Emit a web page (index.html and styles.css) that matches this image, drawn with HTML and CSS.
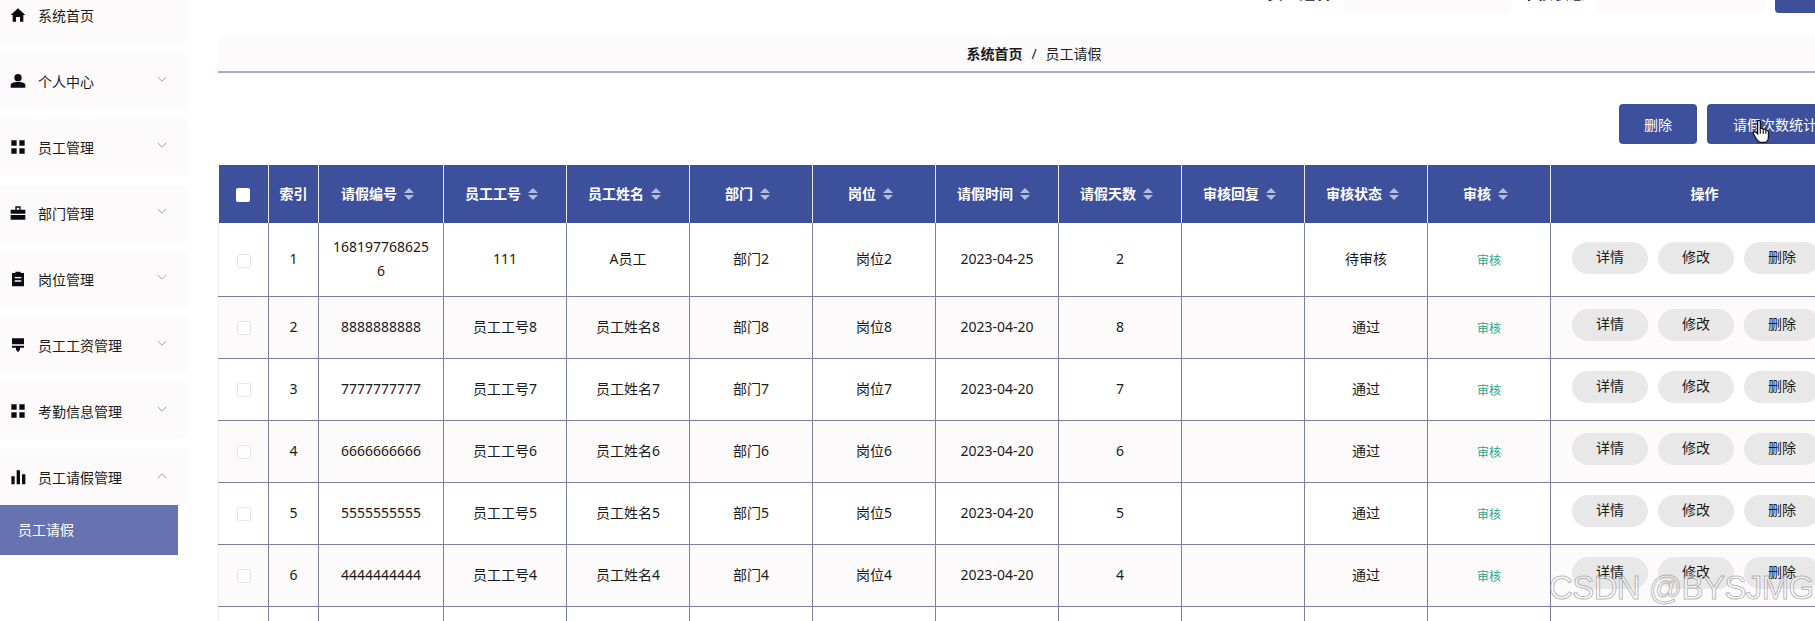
FILE: index.html
```html
<!DOCTYPE html>
<html lang="en">
<head>
  <meta charset="UTF-8">
  <meta name="viewport" content="width=device-width, initial-scale=1.0">
  <title>员工请假</title>
  <link rel="stylesheet" href="styles.css">
</head>
<body>
  <div class="page">
    <aside class="sidebar">
      <div class="menu-item first">
        <svg class="menu-icon" viewBox="0 0 24 24"><path d="M12 2 L23 12 H20 V22 H15 V15 H9 V22 H4 V12 H1 Z"/></svg>
        <span>系统首页</span>
      </div>
      <div class="menu-item">
        <svg class="menu-icon" viewBox="0 0 24 24"><circle cx="12" cy="7" r="5.5"/><path d="M1 22 V18 C1 14 8 13.5 12 13.5 C16 13.5 23 14 23 18 V22 Z"/></svg>
        <span>个人中心</span>
        <svg class="chevron" viewBox="0 0 12 8"><path d="M1 1 L6 6 L11 1"/></svg>
      </div>
      <div class="menu-item">
        <svg class="menu-icon" viewBox="0 0 24 24"><path d="M2 2 H10 V10 H2 Z M14 2 H22 V10 H14 Z M2 14 H10 V22 H2 Z M14 14 H22 V22 H14 Z"/></svg>
        <span>员工管理</span>
        <svg class="chevron" viewBox="0 0 12 8"><path d="M1 1 L6 6 L11 1"/></svg>
      </div>
      <div class="menu-item">
        <svg class="menu-icon" viewBox="0 0 24 24"><path d="M8 2 H16 V7 H23 V13 H1 V7 H8 Z M10 4 V7 H14 V4 Z M1 15 H23 V22 H1 Z"/></svg>
        <span>部门管理</span>
        <svg class="chevron" viewBox="0 0 12 8"><path d="M1 1 L6 6 L11 1"/></svg>
      </div>
      <div class="menu-item">
        <svg class="menu-icon" viewBox="0 0 24 24"><path d="M8 1 H16 V3 H21 V23 H3 V3 H8 Z M7 9 V11 H17 V9 Z M7 14 V16 H17 V14 Z"/></svg>
        <span>岗位管理</span>
        <svg class="chevron" viewBox="0 0 12 8"><path d="M1 1 L6 6 L11 1"/></svg>
      </div>
      <div class="menu-item">
        <svg class="menu-icon" viewBox="0 0 24 24"><path d="M3 2 H21 V11 H3 Z M3 13 H21 V16 H15 V19 L12 23 L9 19 V16 H3 Z"/></svg>
        <span>员工工资管理</span>
        <svg class="chevron" viewBox="0 0 12 8"><path d="M1 1 L6 6 L11 1"/></svg>
      </div>
      <div class="menu-item">
        <svg class="menu-icon" viewBox="0 0 24 24"><path d="M2 2 H10 V10 H2 Z M14 2 H22 V10 H14 Z M2 14 H10 V22 H2 Z M14 14 H22 V22 H14 Z"/></svg>
        <span>考勤信息管理</span>
        <svg class="chevron" viewBox="0 0 12 8"><path d="M1 1 L6 6 L11 1"/></svg>
      </div>
      <div class="menu-item open">
        <svg class="menu-icon" viewBox="0 0 24 24"><path d="M2 11 H7 V23 H2 Z M10 2 H15 V23 H10 Z M18 8 H23 V23 H18 Z"/></svg>
        <span>员工请假管理</span>
        <svg class="chevron" viewBox="0 0 12 8"><path d="M1 7 L6 2 L11 7"/></svg>
      </div>
      <div class="submenu-item">员工请假</div>
    </aside>

    <main class="content">
      <div class="search-bar">
        <span class="search-label">员工姓名</span>
        <div class="search-input"></div>
        <span class="search-label">审核状态</span>
        <div class="search-input"></div>
        <div class="search-btn"></div>
      </div>

      <div class="breadcrumb">
        <b>系统首页</b><span class="sep">/</span><span>员工请假</span>
      </div>

      <div class="toolbar">
        <button class="tool-btn">删除</button>
        <button class="tool-btn wide">请假次数统计</button>
      </div>

      <table class="data-table">
        <colgroup>
          <col class="c-check"><col class="c-index"><col class="c-num">
          <col class="c-std"><col class="c-std"><col class="c-std"><col class="c-std"><col class="c-std">
          <col class="c-std"><col class="c-std"><col class="c-std"><col class="c-std">
          <col class="c-ops">
        </colgroup>
        <thead>
          <tr>
            <th><span class="head-check"></span></th>
            <th>索引</th>
            <th>请假编号<i class="sort"></i></th>
            <th>员工工号<i class="sort"></i></th>
            <th>员工姓名<i class="sort"></i></th>
            <th>部门<i class="sort"></i></th>
            <th>岗位<i class="sort"></i></th>
            <th>请假时间<i class="sort"></i></th>
            <th>请假天数<i class="sort"></i></th>
            <th>审核回复<i class="sort"></i></th>
            <th>审核状态<i class="sort"></i></th>
            <th>审核<i class="sort"></i></th>
            <th>操作</th>
          </tr>
        </thead>
        <tbody>
          <tr class="row-first">
            <td><span class="row-check"></span></td><td>1</td><td>1681977686256</td><td>111</td><td>A员工</td><td>部门2</td><td>岗位2</td><td>2023-04-25</td><td>2</td><td></td><td>待审核</td><td class="audit">审核</td>
            <td class="ops"><div class="ops-row"><span class="op-btn">详情</span><span class="op-btn">修改</span><span class="op-btn">删除</span></div></td>
          </tr>
          <tr>
            <td><span class="row-check"></span></td><td>2</td><td>8888888888</td><td>员工工号8</td><td>员工姓名8</td><td>部门8</td><td>岗位8</td><td>2023-04-20</td><td>8</td><td></td><td>通过</td><td class="audit">审核</td>
            <td class="ops"><div class="ops-row"><span class="op-btn">详情</span><span class="op-btn">修改</span><span class="op-btn">删除</span></div></td>
          </tr>
          <tr>
            <td><span class="row-check"></span></td><td>3</td><td>7777777777</td><td>员工工号7</td><td>员工姓名7</td><td>部门7</td><td>岗位7</td><td>2023-04-20</td><td>7</td><td></td><td>通过</td><td class="audit">审核</td>
            <td class="ops"><div class="ops-row"><span class="op-btn">详情</span><span class="op-btn">修改</span><span class="op-btn">删除</span></div></td>
          </tr>
          <tr>
            <td><span class="row-check"></span></td><td>4</td><td>6666666666</td><td>员工工号6</td><td>员工姓名6</td><td>部门6</td><td>岗位6</td><td>2023-04-20</td><td>6</td><td></td><td>通过</td><td class="audit">审核</td>
            <td class="ops"><div class="ops-row"><span class="op-btn">详情</span><span class="op-btn">修改</span><span class="op-btn">删除</span></div></td>
          </tr>
          <tr>
            <td><span class="row-check"></span></td><td>5</td><td>5555555555</td><td>员工工号5</td><td>员工姓名5</td><td>部门5</td><td>岗位5</td><td>2023-04-20</td><td>5</td><td></td><td>通过</td><td class="audit">审核</td>
            <td class="ops"><div class="ops-row"><span class="op-btn">详情</span><span class="op-btn">修改</span><span class="op-btn">删除</span></div></td>
          </tr>
          <tr>
            <td><span class="row-check"></span></td><td>6</td><td>4444444444</td><td>员工工号4</td><td>员工姓名4</td><td>部门4</td><td>岗位4</td><td>2023-04-20</td><td>4</td><td></td><td>通过</td><td class="audit">审核</td>
            <td class="ops"><div class="ops-row"><span class="op-btn">详情</span><span class="op-btn">修改</span><span class="op-btn">删除</span></div></td>
          </tr>
          <tr>
            <td><span class="row-check"></span></td><td></td><td></td><td></td><td></td><td></td><td></td><td></td><td></td><td></td><td></td><td></td><td class="ops"></td>
          </tr>
        </tbody>
      </table>
    </main>
  </div>

  <!-- things that sit on top of the page: pointer and watermark -->
  <svg class="cursor" viewBox="0 0 16 22">
    <path d="M5 1.5 C6 .6 7.4 1 7.4 2.4 V8.5 C8.4 8 9.6 8.2 10 9 C11 8.6 12 9 12.3 9.8 C13.4 9.5 14.6 10.2 14.6 11.6 V15.5 C14.6 18 13.4 20.6 11.5 20.6 H7.5 C5.8 20.6 4.8 19.4 3.8 17.6 L1.2 13 C.6 11.8 2.2 10.6 3.4 11.6 L5 13.2 Z" fill="#fff" stroke="#111" stroke-width="1.1"/>
    <path d="M7.4 9 V13 M10 9 V13 M12.3 10 V13" stroke="#111" stroke-width="1" fill="none"/>
  </svg>
  <div class="watermark">CSDN @BYSJMG</div>
</body>
</html>
```

FILE: styles.css
```css
html, body {
  margin: 0;
  height: 100%;
  overflow: hidden;
  background: #fff;
}
body {
  font-family: "Noto Sans", "Noto Sans CJK SC", sans-serif;
  font-size: 14px;
  color: #1a1a1a;
}
.page {
  display: flex;
  width: 1815px;
  height: 621px;
  overflow: hidden;
}

/* sidebar */
.sidebar {
  flex: 0 0 188px;
  width: 188px;
  margin-right: 30px;
}
.menu-item {
  display: flex;
  align-items: center;
  height: 56px;
  margin-bottom: 10px;
  padding: 0 21px 0 10px;
  box-sizing: border-box;
  background: #fcfafb;
}
.menu-item.first {
  height: 43px;
  padding-bottom: 13px;
}
.menu-item.open {
  margin-bottom: 0;
}
.menu-icon {
  width: 16px;
  height: 16px;
  margin-right: 12px;
  fill: #0a0a14;
  flex: none;
}
.chevron {
  width: 10px;
  height: 7px;
  margin-left: auto;
  margin-top: -4px;
  fill: none;
  stroke: #8a8f99;
  stroke-width: 1;
}
.submenu-item {
  width: 178px;
  height: 50px;
  line-height: 50px;
  padding-left: 18px;
  box-sizing: border-box;
  background: #6673b0;
  color: #fff;
}

/* main column */
.content {
  flex: none;
  width: 1640px;
}
.search-bar {
  display: flex;
  align-items: flex-end;
  height: 14px;
  padding-left: 1049px;
  overflow: hidden;
}
.search-label {
  flex: none;
  width: 64px;
  margin: 0 12px 13px 0;
  font-size: 16px;
  font-weight: bold;
  line-height: 16px;
  white-space: nowrap;
}
.search-input {
  flex: none;
  width: 168px;
  height: 40px;
  margin-right: 10px;
  background: #fcfafb;
  border-radius: 5px;
}
.search-btn {
  flex: none;
  width: 80px;
  height: 40px;
  margin-bottom: 1px;
  background: #3d509b;
  border-radius: 4px;
}
.breadcrumb {
  display: flex;
  align-items: center;
  justify-content: center;
  height: 32px;
  width: 1632px;
  margin-top: 23px;
  padding-bottom: 2px;
  border-bottom: 2px solid #a3aed6;
  background: #fcfafb;
}
.breadcrumb .sep {
  margin: 0 9px;
}
.toolbar {
  display: flex;
  gap: 10px;
  margin-top: 31px;
  padding-left: 1401px;
}
.tool-btn {
  flex: none;
  width: 78px;
  height: 40px;
  padding: 0;
  border: 0;
  border-radius: 4px;
  background: #3d509b;
  color: #fff;
  font: inherit;
}
.tool-btn.wide {
  width: 136px;
}

/* table */
.data-table {
  margin-top: 21px;
  border-collapse: collapse;
  table-layout: fixed;
  width: 1640px;
  text-align: center;
}
.c-check { width: 50px; }
.c-index { width: 50px; }
.c-num { width: 125px; }
.c-std { width: 123px; }
.c-ops { width: 308px; }
.data-table th {
  height: 58px;
  padding: 0 0 2px;
  box-sizing: border-box;
  background: #3d509b;
  color: #fff;
  font-size: 14px;
  font-weight: bold;
  border-right: 1px solid #e8e8f0;
}
.data-table td {
  height: 62px;
  padding: 0 12px;
  border: 1px solid #7d7f9f;
  border-top: 0;
  box-sizing: border-box;
  word-break: break-all;
  line-height: 24px;
}
.data-table tbody td:first-child {
  border-left-color: #f0f0f4;
}
.data-table tbody tr:nth-child(even) td {
  background: #fcfafb;
}
.data-table .row-first td {
  height: 73px;
}
.sort {
  display: inline-block;
  position: relative;
  width: 10px;
  height: 12px;
  margin: 0 7px;
  vertical-align: -1px;
}
.sort::before,
.sort::after {
  content: "";
  position: absolute;
  left: 0;
  border-left: 5px solid transparent;
  border-right: 5px solid transparent;
}
.sort::before {
  top: 0;
  border-bottom: 5px solid #b4bbd8;
}
.sort::after {
  bottom: 0;
  border-top: 5px solid #b4bbd8;
}
.head-check {
  display: inline-block;
  width: 14px;
  height: 14px;
  background: #fff;
  border-radius: 2px;
  vertical-align: middle;
}
.row-check {
  display: inline-block;
  width: 12px;
  height: 12px;
  border: 1px solid #e6e6e6;
  border-radius: 2px;
  background: #fff;
  vertical-align: middle;
}
.data-table td.audit {
  padding-top: 4px;
  color: #2aa58f;
  font-size: 12px;
}
.data-table td.ops {
  padding: 0 0 0 21px;
  vertical-align: top;
}
.ops-row {
  display: flex;
  gap: 10px;
  padding-top: 12px;
}
.row-first .ops-row {
  padding-top: 19px;
}
.op-btn {
  flex: none;
  width: 76px;
  height: 32px;
  line-height: 30px;
  border-radius: 16px;
  background: #e8e8e8;
}

/* overlays */
.cursor {
  position: absolute;
  left: 1752px;
  top: 119px;
  width: 18px;
  height: 25px;
}
.watermark {
  position: absolute;
  left: 1549px;
  top: 569px;
  font-family: "Liberation Sans", sans-serif;
  font-size: 33px;
  letter-spacing: -0.6px;
  white-space: nowrap;
  color: rgba(255, 255, 255, 0.45);
  -webkit-text-stroke: 1px rgba(120, 120, 120, 0.5);
}
```
